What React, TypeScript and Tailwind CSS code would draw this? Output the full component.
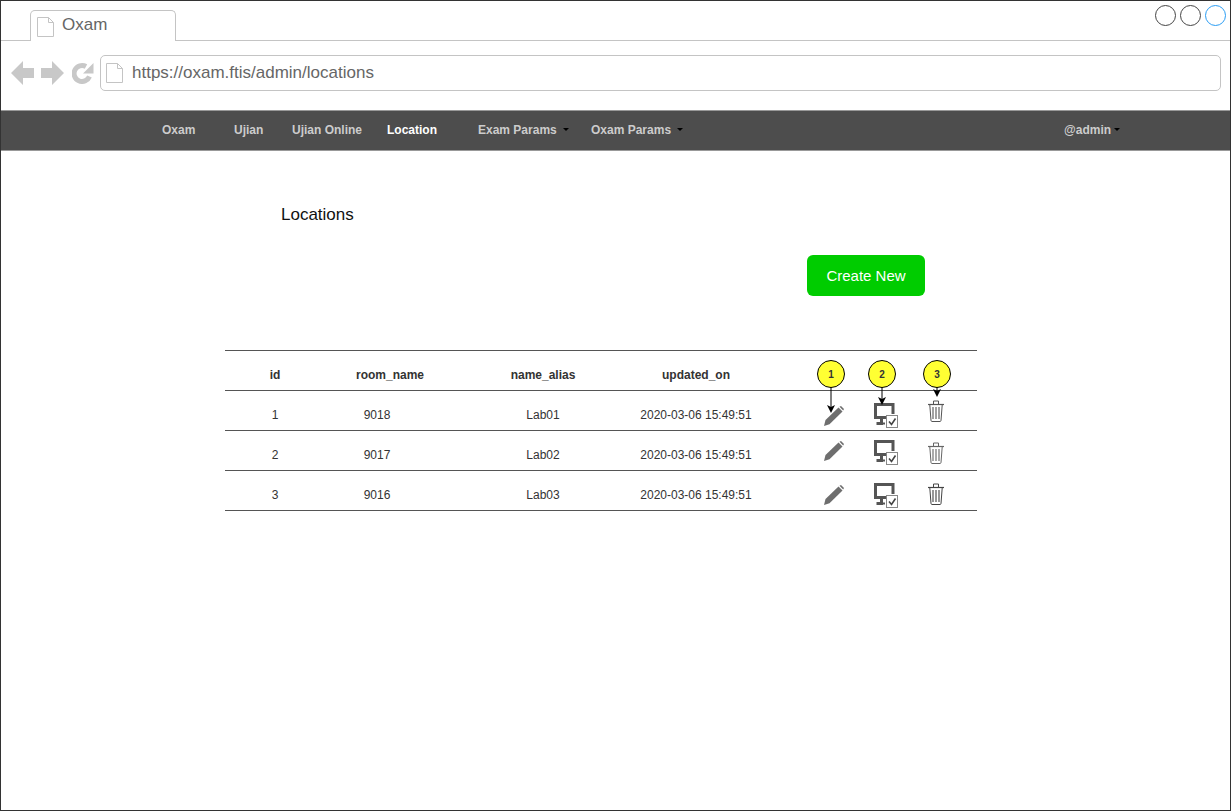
import React from "react";

function DocIcon({ className }: { className: string }) {
  return (
    <svg className={className} viewBox="0 0 17 20" fill="none">
      <path d="M.5.5H11.5L16.5 5.5V19.5H.5Z" fill="#fff" stroke="#c4c4c4" />
      <path d="M11.5.5V5.5H16.5" stroke="#c4c4c4" />
    </svg>
  );
}

function Pencil() {
  return (
    <svg width="20" height="20" viewBox="0 0 20 20">
      <path d="M0 20L1.5 14L14.5 1.5L18.5 5.5L5.5 18.2Z" fill="#6e6e6e" />
      <path d="M15.5.8L17 0L20 3L19.2 4.6Z" fill="#6e6e6e" />
    </svg>
  );
}

function Monitor() {
  return (
    <svg width="24" height="25" viewBox="0 0 24 25" fill="none">
      <path d="M12 14.5H1.5V1.5H19V11" stroke="#555" strokeWidth="3" />
      <path d="M7.5 14.5V20.5H2.5" stroke="#555" strokeWidth="3" />
      <path d="M7 20.5H11" stroke="#555" strokeWidth="2" />
      <rect x="12.5" y="12.5" width="11" height="12" fill="#fff" stroke="#888" />
      <path d="M15 18.5L17.5 21.5L21.5 15.5" stroke="#444" strokeWidth="1.6" />
    </svg>
  );
}

function Trash({ color }: { color: string }) {
  return (
    <svg width="16" height="22" viewBox="0 0 16 22" fill="none" stroke={color}>
      <path d="M0 4.5H16" strokeWidth="1.2" />
      <path d="M5.5 4V1H10.5V4" />
      <path d="M1.8 5L3 20.5C3 21 3.5 21.5 4 21.5H12C12.5 21.5 13 21 13 20.5L14.2 5" />
      <path d="M5 7V19M8 7V19M11 7V19" strokeWidth="1.1" />
    </svg>
  );
}

function Callout({ n, pos, arrow }: { n: number; pos: string; arrow: number }) {
  return (
    <div className={`absolute w-[28px] flex flex-col items-center ${pos}`}>
      <div className="w-[28px] h-[28px] rounded-full bg-[#ffff33] border border-black flex items-center justify-center text-[10px] font-bold text-[#333]">
        {n}
      </div>
      <svg width="12" height={arrow} viewBox={`0 0 12 ${arrow}`} className="-mt-px">
        <path d={`M6 0V${arrow - 5}`} stroke="#000" strokeWidth="1" />
        <path d={`M2 ${arrow - 8}L6 ${arrow - 6}L10 ${arrow - 8}L6 ${arrow}Z`} fill="#000" />
      </svg>
    </div>
  );
}

const rows = [
  { id: "1", room: "9018", alias: "Lab01", date: "2020-03-06 15:49:51", p: "mt-[15px]", m: "mt-[12px]", t: "mt-[9px]", tc: "#555" },
  { id: "2", room: "9017", alias: "Lab02", date: "2020-03-06 15:49:51", p: "mt-[10px]", m: "mt-[9px]", t: "mt-[11px]", tc: "#666" },
  { id: "3", room: "9016", alias: "Lab03", date: "2020-03-06 15:49:51", p: "mt-[14px]", m: "mt-[12px]", t: "mt-[12px]", tc: "#444" },
];

const gridCols = "grid grid-cols-[100px_130px_176px_130px_1fr]";

export default function App() {
  return (
    <div className="w-[1231px] h-[811px] box-border border border-[#333] bg-white overflow-hidden [font-family:'Liberation_Sans',Arial,sans-serif]">
      <div className="h-[39px] border-b border-[#c4c4c4] box-content flex justify-between pl-[29px] pr-[4px]">
        <div className="mt-[9px] w-[146px] h-[31px] bg-white border border-b-0 border-[#c4c4c4] rounded-t-[5px] flex items-start pl-[6px] pt-[6px] gap-[8px] z-10">
          <DocIcon className="w-[17px] h-[20px]" />
          <span className="text-[17px] leading-[16px] text-[#666]">Oxam</span>
        </div>
        <div className="flex gap-[4px] mt-[4px]">
          <div className="w-[21px] h-[21px] rounded-full border border-[#444]" />
          <div className="w-[21px] h-[21px] rounded-full border border-[#444]" />
          <div className="w-[21px] h-[21px] rounded-full border border-[#2a9df4]" />
        </div>
      </div>

      <div className="h-[69px] flex items-start pl-[10px] pr-[9px] pt-[14px]">
        <div className="w-[89px] flex items-center h-[36px] shrink-0">
          <svg width="23" height="24" viewBox="0 0 23 24"><path d="M0 12L12 0V7H23V17H12V24Z" fill="#c8c8c8" /></svg>
          <svg width="23" height="24" viewBox="0 0 23 24" className="ml-[7px]"><path d="M23 12L11 0V7H0V17H11V24Z" fill="#c8c8c8" /></svg>
          <svg width="22" height="22" viewBox="0 0 22 22" className="ml-[8px]">
            <path d="M17.5 14.5A8 8 0 1 1 14 4.5" fill="none" stroke="#c8c8c8" strokeWidth="5" />
            <path d="M21.5 1V11.5H11Z" fill="#c8c8c8" />
          </svg>
        </div>
        <div className="flex-1 h-[36px] border border-[#c4c4c4] rounded-[5px] flex items-center pl-[5px] gap-[9px]">
          <DocIcon className="w-[17px] h-[20px]" />
          <span className="text-[17px] text-[#666]">https://oxam.ftis/admin/locations</span>
        </div>
      </div>

      <nav className="h-[41px] bg-[#4d4d4d] border-t border-b border-[#999] flex items-center text-[12px] leading-[12px] font-bold text-[#ccc] pl-[161px] pb-[2px]">
        <span className="w-[72px]">Oxam</span>
        <span className="w-[58px]">Ujian</span>
        <span className="w-[95px]">Ujian Online</span>
        <span className="w-[91px] text-white">Location</span>
        <span className="w-[113px] flex items-center">
          Exam Params
          <span className="ml-[6px] border-x-[3px] border-x-transparent border-t-[3px] border-t-black" />
        </span>
        <span className="w-[473px] flex items-center">
          Oxam Params
          <span className="ml-[6px] border-x-[3px] border-x-transparent border-t-[3px] border-t-black" />
        </span>
        <span className="flex items-center">
          @admin
          <span className="ml-[3px] border-x-[3px] border-x-transparent border-t-[3px] border-t-black" />
        </span>
      </nav>

      <main>
        <h1 className="ml-[280px] mt-[54px] text-[17px] leading-[20px] font-normal text-[#111]">Locations</h1>
        <div className="ml-[806px] mt-[30px] w-[118px] h-[41px] bg-[#00cc00] rounded-[6px] flex items-center justify-center text-white text-[15px] pt-[2px]">
          Create New
        </div>

        <div className="relative ml-[224px] mt-[54px] w-[752px] text-[12px] text-[#333]">
          <div className={`${gridCols} h-[41px] items-center border-y border-[#555] font-bold pt-[9px] text-[#333]`}>
            <span className="text-center">id</span>
            <span className="text-center">room_name</span>
            <span className="text-center">name_alias</span>
            <span className="text-center">updated_on</span>
            <span />
          </div>
          {rows.map((r) => (
            <div key={r.id} className={`${gridCols} h-[40px] border-b border-[#555]`}>
              <span className="text-center leading-[48px]">{r.id}</span>
              <span className="text-center leading-[48px] pr-[26px]">{r.room}</span>
              <span className="text-center leading-[48px]">{r.alias}</span>
              <span className="text-center leading-[48px]">{r.date}</span>
              <div className="flex items-start pl-[63px]">
                <div className={`w-[20px] ${r.p}`}><Pencil /></div>
                <div className={`ml-[30px] w-[24px] ${r.m}`}><Monitor /></div>
                <div className={`ml-[30px] w-[16px] ${r.t}`}><Trash color={r.tc} /></div>
              </div>
            </div>
          ))}
          <Callout n={1} pos="left-[592px] top-[10px]" arrow={26} />
          <Callout n={2} pos="left-[643px] top-[10px]" arrow={18} />
          <Callout n={3} pos="left-[698px] top-[10px]" arrow={10} />
        </div>
      </main>
    </div>
  );
}
